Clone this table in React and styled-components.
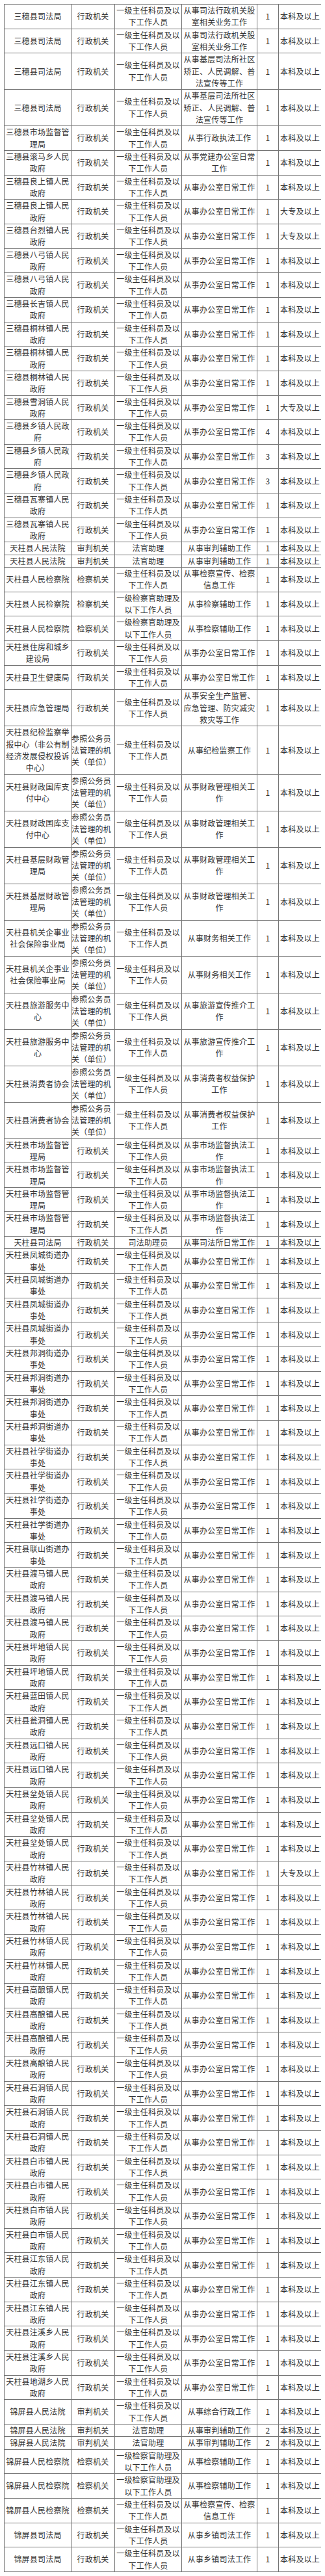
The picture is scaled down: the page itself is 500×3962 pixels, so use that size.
import React from "react";
import styled, { createGlobalStyle } from "styled-components";

const GlobalStyle = createGlobalStyle`
  body {
    margin: 6px;
    background: #fff;
    font-family: "Noto Sans CJK SC", "Noto Sans", sans-serif;
  }
`;

const Table = styled.table`
  width: 489px;
  table-layout: fixed;
  border-collapse: collapse;
  border: 1px solid #747474;
  color: #333;
  font-size: 12px;
  line-height: 18.33px;
  letter-spacing: 0.2px;
`;

const Cell = styled.td`
  border: 1px solid #747474;
  padding: 0;
  text-align: ${props => (props.$left ? "left" : "center")};
  vertical-align: middle;
  word-break: break-all;
`;

const XZ = "行政机关";
const SF = "一级主任科员及以下工作人员";
const JC = "一级检察官助理及以下工作人员";
const CZ = "参照公务员法管理的机关（单位）";
const BG = "从事办公室日常工作";
const BK = "本科及以上";
const DZ = "大专及以上";

const rep = (n, row) => Array.from({ length: n }, () => row);
const town = (name, n, edu = BK) => rep(n, [name, XZ, SF, BG, 1, edu]);

const rows = [
  ...rep(2, ["三穗县司法局", XZ, SF, "从事司法行政机关股室相关业务工作", 1, BK]),
  ...rep(2, ["三穗县司法局", XZ, SF, "从事基层司法所社区矫正、人民调解、普法宣传等工作", 1, BK]),
  ["三穗县市场监督管理局", XZ, SF, "从事行政执法工作", 1, BK],
  ["三穗县滚马乡人民政府", XZ, SF, "从事党建办公室日常工作", 1, BK],
  ...town("三穗县良上镇人民政府", 1),
  ...town("三穗县良上镇人民政府", 1, DZ),
  ...town("三穗县台烈镇人民政府", 1, DZ),
  ...town("三穗县八弓镇人民政府", 2),
  ...town("三穗县长吉镇人民政府", 1),
  ...town("三穗县桐林镇人民政府", 3),
  ...town("三穗县雪洞镇人民政府", 1, DZ),
  ["三穗县乡镇人民政府", XZ, SF, BG, 4, BK],
  ...rep(2, ["三穗县乡镇人民政府", XZ, SF, BG, 3, BK]),
  ...town("三穗县瓦寨镇人民政府", 2),
  ...rep(2, ["天柱县人民法院", "审判机关", "法官助理", "从事审判辅助工作", 1, BK]),
  ["天柱县人民检察院", "检察机关", SF, "从事检察宣传、检察信息工作", 1, BK],
  ...rep(2, ["天柱县人民检察院", "检察机关", JC, "从事检察辅助工作", 1, BK]),
  ...town("天柱县住房和城乡建设局", 1),
  ...town("天柱县卫生健康局", 1),
  ["天柱县应急管理局", XZ, SF, "从事安全生产监管、应急管理、防灾减灾救灾等工作", 1, BK],
  ["天柱县纪检监察举报中心（非公有制经济发展侵权投诉中心）", CZ, SF, "从事纪检监察工作", 1, BK],
  ...rep(2, ["天柱县财政国库支付中心", CZ, SF, "从事财政管理相关工作", 1, BK]),
  ...rep(2, ["天柱县基层财政管理局", CZ, SF, "从事财政管理相关工作", 1, BK]),
  ...rep(2, ["天柱县机关企事业社会保险事业局", CZ, SF, "从事财务相关工作", 1, BK]),
  ...rep(2, ["天柱县旅游服务中心", CZ, SF, "从事旅游宣传推介工作", 1, BK]),
  ...rep(2, ["天柱县消费者协会", CZ, SF, "从事消费者权益保护工作", 1, BK]),
  ...rep(4, ["天柱县市场监督管理局", XZ, SF, "从事市场监督执法工作", 1, BK]),
  ["天柱县司法局", XZ, "司法助理员", "从事司法所日常工作", 1, BK],
  ...town("天柱县凤城街道办事处", 4),
  ...town("天柱县邦洞街道办事处", 4),
  ...town("天柱县社学街道办事处", 4),
  ...town("天柱县联山街道办事处", 1),
  ...town("天柱县渡马镇人民政府", 3),
  ...town("天柱县坪地镇人民政府", 2),
  ...town("天柱县蓝田镇人民政府", 1),
  ...town("天柱县瓮洞镇人民政府", 1),
  ...town("天柱县远口镇人民政府", 2),
  ...town("天柱县坌处镇人民政府", 3),
  ...town("天柱县竹林镇人民政府", 1, DZ),
  ...town("天柱县竹林镇人民政府", 4),
  ...town("天柱县高酿镇人民政府", 4),
  ...town("天柱县石洞镇人民政府", 3),
  ...town("天柱县白市镇人民政府", 4),
  ...town("天柱县江东镇人民政府", 3),
  ...town("天柱县注溪乡人民政府", 2),
  ...town("天柱县地湖乡人民政府", 1),
  ["锦屏县人民法院", "审判机关", SF, "从事综合行政工作", 1, BK],
  ...rep(2, ["锦屏县人民法院", "审判机关", "法官助理", "从事审判辅助工作", 2, BK]),
  ...rep(2, ["锦屏县人民检察院", "检察机关", JC, "从事检察辅助工作", 1, BK]),
  ["锦屏县人民检察院", "检察机关", SF, "从事检察宣传、检察信息工作", 1, BK],
  ...rep(2, ["锦屏县司法局", XZ, SF, "从事乡镇司法工作", 1, BK]),
];

const widths = [103, 67, 103, 116, 33, 66];

const App = () => (
  <>
    <GlobalStyle />
    <Table>
      <colgroup>
        {widths.map((w, i) => (
          <col key={i} style={{ width: w }} />
        ))}
      </colgroup>
      <tbody>
        {rows.map((row, i) => (
          <tr key={i}>
            {row.map((text, j) => (
              <Cell key={j} $left={j === 1 && text === CZ}>
                {text}
              </Cell>
            ))}
          </tr>
        ))}
      </tbody>
    </Table>
  </>
);

export default App;
